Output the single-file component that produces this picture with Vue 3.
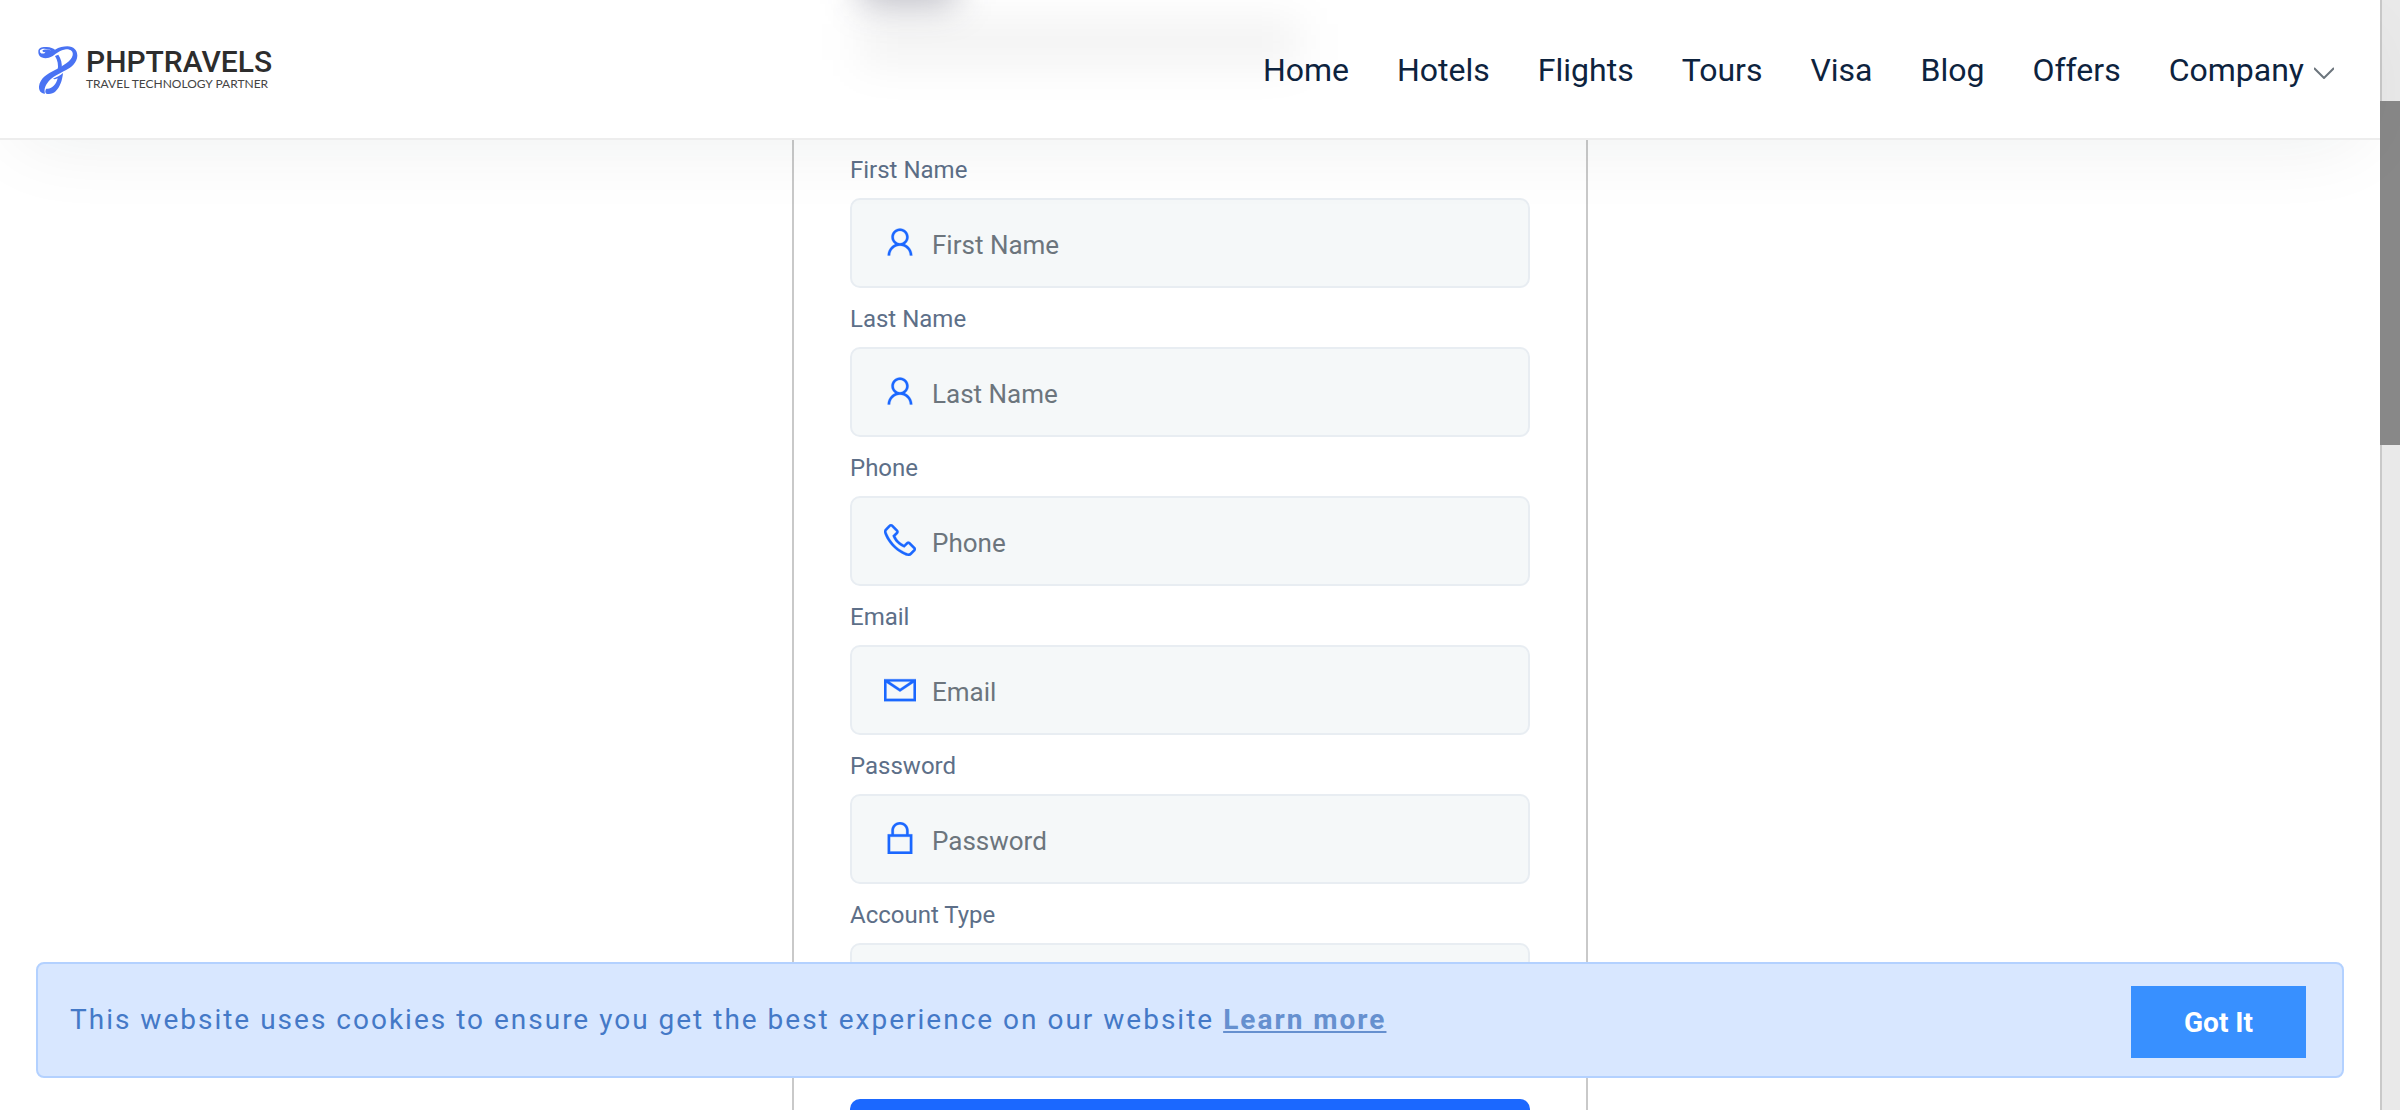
<script setup>
import { ref } from 'vue'

const userIcon = 'M16 5C12.14 5 9 8.14 9 12c0 2.41 1.23 4.55 3.09 5.81C8.53 19.34 6 22.88 6 27h2c0-4.43 3.57-8 8-8s8 3.57 8 8h2c0-4.12-2.53-7.66-6.09-9.19C21.77 16.55 23 14.41 23 12c0-3.86-3.14-7-7-7zM16 7c2.77 0 5 2.23 5 5s-2.23 5-5 5-5-2.23-5-5 2.23-5 5-5z'
const phoneIcon = 'M8.656 3C8.133 3 7.617 3.188 7.188 3.531L7.125 3.563 7.094 3.594 3.969 6.813 4 6.844C3.035 7.734 2.738 9.066 3.156 10.219C4.004 12.676 6.172 17.359 10.406 21.594C14.656 25.844 19.402 27.926 21.75 28.844L21.781 28.844C22.996 29.25 24.313 28.961 25.25 28.156L28.406 25C29.234 24.172 29.234 22.734 28.406 21.906L24.344 17.844 24.313 17.781C23.484 16.953 22.016 16.953 21.188 17.781L19.188 19.781C18.465 19.434 16.742 18.543 15.094 16.969C13.457 15.406 12.621 13.609 12.313 12.906L14.313 10.906C15.152 10.066 15.168 8.668 14.281 7.844L14.313 7.813 14.219 7.719 10.219 3.594 10.188 3.563 10.125 3.531C9.695 3.188 9.18 3 8.656 3ZM8.656 5C8.73 5 8.805 5.035 8.875 5.094L12.875 9.188 12.969 9.281C12.961 9.273 13.027 9.379 12.906 9.5L10.406 12 9.938 12.438 10.156 13.063C10.156 13.063 11.305 16.137 13.719 18.438L13.938 18.625C16.262 20.746 19 21.906 19 21.906L19.625 22.188 22.594 19.219C22.766 19.047 22.734 19.047 22.906 19.219L27 23.313C27.172 23.484 27.172 23.422 27 23.594L23.938 26.656C23.477 27.051 22.988 27.133 22.406 26.938C20.141 26.047 15.738 24.113 11.813 20.188C7.855 16.23 5.789 11.742 5.031 9.563C4.879 9.156 4.988 8.555 5.344 8.25L5.406 8.188 8.438 5.094C8.508 5.035 8.582 5 8.656 5Z'
const mailIcon = 'M3 8L3 26 29 26 29 8ZM7.313 10L24.688 10 16 15.781ZM5 10.875L15.438 17.844 16 18.188 16.563 17.844 27 10.875 27 24 5 24Z'
const lockIcon = 'M16 3C12.156 3 9 6.156 9 10L9 13 6 13 6 29 26 29 26 13 23 13 23 10C23 6.156 19.844 3 16 3ZM16 5C18.754 5 21 7.246 21 10L21 13 11 13 11 10C11 7.246 13.246 5 16 5ZM8 15L24 15 24 27 8 27Z'

const links = ['Home', 'Hotels', 'Flights', 'Tours', 'Visa', 'Blog', 'Offers']
const fields = [
  { id: 'first-name', label: 'First Name', type: 'text', icon: userIcon },
  { id: 'last-name', label: 'Last Name', type: 'text', icon: userIcon },
  { id: 'phone', label: 'Phone', type: 'tel', icon: phoneIcon },
  { id: 'email', label: 'Email', type: 'email', icon: mailIcon },
  { id: 'password', label: 'Password', type: 'password', icon: lockIcon }
]
const form = ref({})
</script>

<template>
  <div class="screen">
    <div class="page">
      <header class="header">
        <span class="backdrop">
          <span class="haze haze-dark"></span>
          <span class="haze haze-light"></span>
        </span>
        <a class="brand" href="#">
          <svg class="mark" viewBox="117 135 120 147" fill="#4a73f3" aria-hidden="true">
            <path fill-rule="evenodd" d="M118 152C117 140 130 137 143 138C155 138 163 143 168 146C180 138 194 136 205 136C224 136 235 148 235 164C234 185 218 198 200 208C179 219 160 228 149 241C140 252 134 263 138 278C125 278 119 268 120 256C123 232 145 218 168 207C192 195 217 181 221 163C224 150 212 144 201 145C184 147 172 158 160 166C146 174 129 173 122 165C119 161 118 157 118 152ZM124 155C129 160 139 158 139 152C136 155 131 153 130 149C136 143 150 146 157 149C146 142 127 141 123 148C122 151 123 153 124 155Z" />
            <path d="M168 165L178 161C186 173 190 188 188 202L176 208C179 192 176 177 168 165Z" />
            <path d="M162 233C173 229 184 223 192 216C190 238 183 258 170 271C162 279 150 281 142 278C137 273 139 267 142 263C158 266 172 250 176 232C171 235 165 235 162 233Z" />
          </svg>
          <span class="brand-text">
            <span class="brand-name">PHPTRAVELS</span>
            <span class="brand-tag">TRAVEL TECHNOLOGY PARTNER</span>
          </span>
        </a>
        <nav class="nav">
          <a v-for="link in links" :key="link" href="#">{{ link }}</a>
          <a class="more" href="#">Company
            <svg width="20" height="12" viewBox="0 0 20 12" fill="none" stroke="#6c757d" stroke-width="2" aria-hidden="true"><path d="M0 1l10 10L20 1" /></svg>
          </a>
        </nav>
      </header>

      <main class="content">
        <form class="card" @submit.prevent>
          <div v-for="field in fields" :key="field.id" class="group">
            <label :for="field.id">{{ field.label }}</label>
            <div class="control">
              <svg class="icon" viewBox="3 3 26 26" fill="#1b68ff" stroke="#1b68ff" stroke-width="0.2" fill-rule="evenodd" aria-hidden="true"><path :d="field.icon" /></svg>
              <input :id="field.id" v-model="form[field.id]" :type="field.type" :placeholder="field.label" />
            </div>
          </div>
          <div class="group">
            <label for="account-type">Account Type</label>
            <select id="account-type"></select>
          </div>
          <button class="submit" type="submit"></button>
        </form>
      </main>

      <aside class="cookies">
        <p>This website uses cookies to ensure you get the best experience on our website <a href="#">Learn more</a></p>
        <button type="button">Got It</button>
      </aside>
    </div>
    <div class="scrollbar"><span class="thumb"></span></div>
  </div>
</template>

<style>
body {
  margin: 0;
  background: #fff;
}
</style>

<style scoped>
.screen,
.screen * {
  box-sizing: border-box;
}
.screen {
  display: flex;
  height: 100vh;
  overflow: hidden;
  font-family: Roboto, "Liberation Sans", sans-serif;
}
.page {
  position: relative;
  flex: 1;
  min-width: 0;
}
.header {
  position: relative;
  z-index: 1;
  display: flex;
  align-items: center;
  justify-content: space-between;
  height: 140px;
  padding: 2px 46px 0 38px;
  background: #fff;
  border-bottom: 2px solid #ededed;
  box-shadow: 0 20px 80px -20px rgba(20, 40, 40, 0.08);
}
.backdrop {
  position: absolute;
  inset: 0;
  overflow: hidden;
}
.haze {
  position: absolute;
}
.haze-dark {
  top: -60px;
  left: 860px;
  width: 96px;
  height: 64px;
  background: rgba(30, 30, 60, 0.3);
  filter: blur(18px);
}
.haze-light {
  top: 22px;
  left: 860px;
  width: 440px;
  height: 40px;
  background: rgba(0, 0, 0, 0.06);
  filter: blur(22px);
}
.brand {
  position: relative;
  display: flex;
  align-items: center;
  gap: 8px;
  text-decoration: none;
}
.mark {
  width: 40px;
  height: 49px;
}
.brand-text {
  display: flex;
  flex-direction: column;
}
.brand-name {
  font-size: 30px;
  font-weight: 500;
  line-height: 28px;
  color: #2d2d2d;
}
.brand-tag {
  font-family: Lato, Roboto, sans-serif;
  font-size: 12px;
  line-height: 16px;
  color: #444;
}
.nav {
  position: relative;
  display: flex;
  align-items: center;
  gap: 48px;
}
.nav a {
  font-size: 32px;
  line-height: 48px;
  color: #0d233e;
  text-decoration: none;
}
.nav .more {
  display: flex;
  align-items: center;
  gap: 10px;
}
.more svg {
  margin-top: 6px;
}
.card {
  width: 796px;
  max-width: 100%;
  margin: 0 auto;
  padding: 12px 56px 60px;
  border: 2px solid #c9c9c9;
  border-width: 0 2px 2px;
}
.group {
  margin-bottom: 13px;
}
label {
  display: block;
  margin-bottom: 10px;
  font-size: 24px;
  line-height: 36px;
  color: #5d6f88;
}
.control {
  position: relative;
}
.icon {
  position: absolute;
  top: 28px;
  left: 34px;
  width: 32px;
  height: 32px;
}
input,
select {
  display: block;
  width: 100%;
  height: 90px;
  padding: 4px 28px 0 80px;
  border: 2px solid #e8edf2;
  border-radius: 10px;
  background: #f5f8f9;
  font: 26px Roboto, "Liberation Sans", sans-serif;
  color: #212529;
  appearance: none;
}
input::placeholder {
  color: #6c757d;
  opacity: 1;
}
.submit {
  display: block;
  width: 100%;
  height: 90px;
  margin-top: 66px;
  border: 0;
  border-radius: 10px;
  background: #1b68ff;
}
.cookies {
  position: absolute;
  z-index: 2;
  right: 36px;
  bottom: 32px;
  left: 36px;
  display: flex;
  align-items: center;
  justify-content: space-between;
  height: 116px;
  padding: 4px 36px 0 32px;
  border: 2px solid #b3d1ff;
  border-radius: 8px;
  background: #d8e7ff;
}
.cookies p {
  margin: 0 0 4px;
  font-size: 28px;
  line-height: 42px;
  letter-spacing: 2px;
  color: #4479c7;
}
.cookies a {
  font-weight: 700;
  color: #6690cf;
}
.cookies button {
  width: 175px;
  height: 72px;
  border: 0;
  background: #3890ff;
  color: #fff;
  font: 700 28px Roboto, "Liberation Sans", sans-serif;
}
.scrollbar {
  width: 20px;
  padding-top: 101px;
  background: linear-gradient(90deg, #c9c9c9 2px, #e9e9e9 2px);
}
.thumb {
  display: block;
  height: 344px;
  background: #888;
}
</style>
